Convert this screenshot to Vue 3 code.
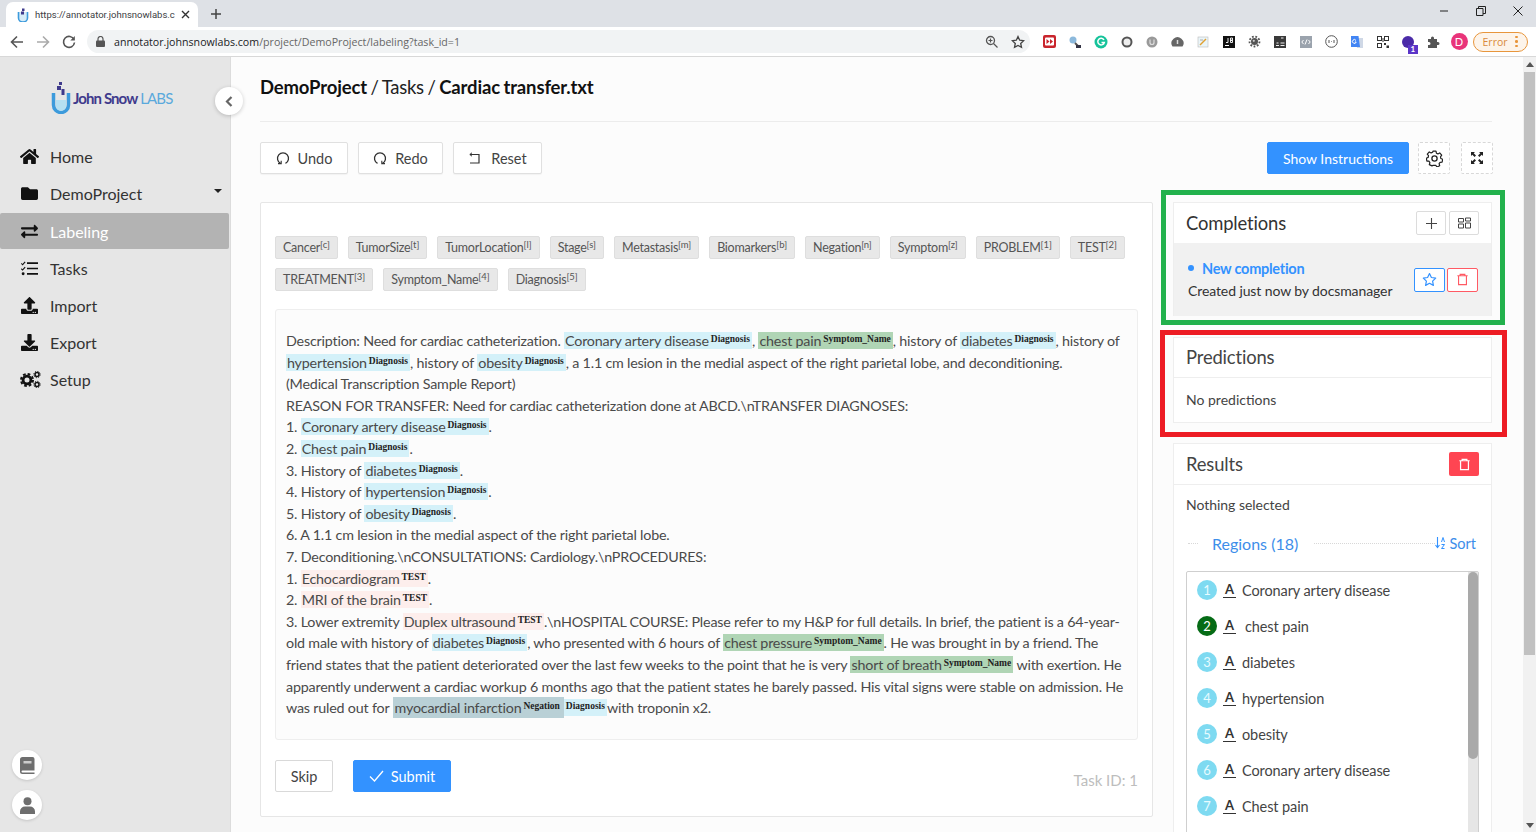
<script setup>
const tags1 = [['Cancer','c'],['TumorSize','t'],['TumorLocation','l'],['Stage','s'],['Metastasis','m'],['Biomarkers','b'],['Negation','n'],['Symptom','z'],['PROBLEM','1'],['TEST','2']]
const tags2 = [['TREATMENT','3'],['Symptom_Name','4'],['Diagnosis','5']]
const D = 'Diagnosis', S = 'Symptom_Name', T = 'TEST'
const lines = [
  ['Description: Need for cardiac catheterization. ', ['Coronary artery disease', D], ', ', ['chest pain', S], ', history of ', ['diabetes', D], ', history of'],
  [['hypertension', D], ', history of ', ['obesity', D], ', a 1.1 cm lesion in the medial aspect of the right parietal lobe, and deconditioning.'],
  ['(Medical Transcription Sample Report)'],
  ['REASON FOR TRANSFER: Need for cardiac catheterization done at ABCD.\\nTRANSFER DIAGNOSES:'],
  ['1. ', ['Coronary artery disease', D], '.'],
  ['2. ', ['Chest pain', D], '.'],
  ['3. History of ', ['diabetes', D], '.'],
  ['4. History of ', ['hypertension', D], '.'],
  ['5. History of ', ['obesity', D], '.'],
  ['6. A 1.1 cm lesion in the medial aspect of the right parietal lobe.'],
  ['7. Deconditioning.\\nCONSULTATIONS: Cardiology.\\nPROCEDURES:'],
  ['1. ', ['Echocardiogram', T], '.'],
  ['2. ', ['MRI of the brain', T], '.'],
  ['3. Lower extremity ', ['Duplex ultrasound', T], '.\\nHOSPITAL COURSE: Please refer to my H&P for full details. In brief, the patient is a 64-year-'],
  ['old male with history of ', ['diabetes', D], ', who presented with 6 hours of ', ['chest pressure', S], '. He was brought in by a friend. The'],
  ['friend states that the patient deteriorated over the last few weeks to the point that he is very ', ['short of breath', S], ' with exertion. He'],
  ['apparently underwent a cardiac workup 6 months ago that the patient states he barely passed. His vital signs were stable on admission. He'],
  ['was ruled out for ', ['myocardial infarction', 'Negation'], ['', D], 'with troponin x2.']
]
const cls = { Diagnosis: 'hl-d', Symptom_Name: 'hl-s', TEST: 'hl-t', Negation: 'hl-n' }
const regions = [
  ['1', 'Coronary artery disease', false],
  ['2', 'chest pain', true],
  ['3', 'diabetes', false],
  ['4', 'hypertension', false],
  ['5', 'obesity', false],
  ['6', 'Coronary artery disease', false],
  ['7', 'Chest pain', false]
]
const nav = [
  { t: 'Home', v: '0 0 576 512', d: 'M280.37 148.26L96 300.11V464a16 16 0 0 0 16 16l112.06-.29a16 16 0 0 0 15.92-16V368a16 16 0 0 1 16-16h64a16 16 0 0 1 16 16v95.64a16 16 0 0 0 16 16.05L464 480a16 16 0 0 0 16-16V300L295.67 148.26a12.19 12.19 0 0 0-15.3 0zM571.6 251.47L488 182.56V44.05a12 12 0 0 0-12-12h-56a12 12 0 0 0-12 12v72.61L318.47 43a48 48 0 0 0-61 0L4.34 251.47a12 12 0 0 0-1.6 16.9l25.5 31A12 12 0 0 0 45.15 301l235.22-193.74a12.19 12.19 0 0 1 15.3 0L530.9 301a12 12 0 0 0 16.9-1.6l25.5-31a12 12 0 0 0-1.7-16.93z' },
  { t: 'DemoProject', v: '0 0 512 512', d: 'M464 128H272l-64-64H48C21.49 64 0 85.49 0 112v288c0 26.51 21.49 48 48 48h416c26.51 0 48-21.49 48-48V176c0-26.51-21.49-48-48-48z', caret: true },
  { t: 'Labeling', active: true, v: '0 0 512 512', d: 'M0 168v-16c0-13.255 10.745-24 24-24h360V80c0-21.367 25.899-32.042 40.971-16.971l80 80c9.372 9.373 9.372 24.569 0 33.941l-80 80C409.956 271.982 384 261.456 384 240v-48H24c-13.255 0-24-10.745-24-24zm488 152H128v-48c0-21.314-25.862-32.08-40.971-16.971l-80 80c-9.372 9.373-9.372 24.569 0 33.941l80 80C102.057 463.997 128 453.437 128 432v-48h360c13.255 0 24-10.745 24-24v-16c0-13.255-10.745-24-24-24z' },
  { t: 'Tasks', v: '0 0 512 512', d: 'M180 70h332v52H180zM180 230h332v52H180zM180 390h332v52H180zM20 92l26 26L112 42l26 22-90 100L0 116zM20 252l26 26 66-76 26 22-90 100L0 276zM64 372a44 44 0 1 1 0 88 44 44 0 0 1 0-88z' },
  { t: 'Import', v: '0 0 512 512', d: 'M296 384h-80c-13.3 0-24-10.7-24-24V192h-87.7c-17.8 0-26.7-21.5-14.1-34.1L242.3 5.7c7.5-7.5 19.8-7.5 27.3 0l152.2 152.2c12.6 12.6 3.7 34.1-14.1 34.1H320v168c0 13.3-10.7 24-24 24zm216-8v112c0 13.3-10.7 24-24 24H24c-13.3 0-24-10.7-24-24V376c0-13.3 10.7-24 24-24h136v8c0 30.9 25.1 56 56 56h80c30.9 0 56-25.1 56-56v-8h136c13.3 0 24 10.7 24 24zm-124 88c0-11-9-20-20-20s-20 9-20 20 9 20 20 20 20-9 20-20zm64 0c0-11-9-20-20-20s-20 9-20 20 9 20 20 20 20-9 20-20z' },
  { t: 'Export', v: '0 0 512 512', d: 'M216 0h80c13.3 0 24 10.7 24 24v168h87.7c17.8 0 26.7 21.5 14.1 34.1L269.7 378.3c-7.5 7.5-19.8 7.5-27.3 0L90.1 226.1c-12.6-12.6-3.7-34.1 14.1-34.1H192V24c0-13.3 10.7-24 24-24zm296 376v112c0 13.3-10.7 24-24 24H24c-13.3 0-24-10.7-24-24V376c0-13.3 10.7-24 24-24h146.7l49 49c20.1 20.1 52.5 20.1 72.6 0l49-49H488c13.3 0 24 10.7 24 24zm-124 88c0-11-9-20-20-20s-20 9-20 20 9 20 20 20 20-9 20-20zm64 0c0-11-9-20-20-20s-20 9-20 20 9 20 20 20 20-9 20-20z' },
  { t: 'Setup', cogs: true }
]
const trash = 'M5.5 4V2.5h5V4M2.5 4h11M3.8 4v9.500h8.400V4'
</script>

<template>
  <div class="page">
    <div class="tabstrip">
      <div class="tab">
        <svg class="fav" width="12" height="14" viewBox="0 0 12 14"><path d="M1.5 4v6a4.5 4 0 0 0 9 0V4" fill="#d6ecf8" stroke="#3d9bdc" stroke-width="1.6"/><rect x="5" y="0.5" width="2.5" height="2.5" fill="#3f3a8c"/><rect x="4" y="3.5" width="3" height="3" fill="#3f3a8c"/></svg>
        <span class="tab-title">https://annotator.johnsnowlabs.c</span>
        <svg class="tab-x" width="9" height="9" viewBox="0 0 9 9"><path d="M1 1l7 7M8 1L1 8" stroke="#333" stroke-width="1.4"/></svg>
      </div>
      <svg class="plus" width="12" height="12" viewBox="0 0 12 12"><path d="M6 1v10M1 6h10" stroke="#444" stroke-width="1.5"/></svg>
      <div class="winctl">
        <svg width="12" height="12" viewBox="0 0 12 12"><path d="M2 6h8" stroke="#222" stroke-width="1"/></svg>
        <svg width="12" height="12" viewBox="0 0 12 12"><path d="M1.5 3.5h6.5v7H1.5zM3.5 3.5V1.5h7v7H8" fill="none" stroke="#222"/></svg>
        <svg width="12" height="12" viewBox="0 0 12 12"><path d="M1.5 1.5l9 9M10.5 1.5l-9 9" stroke="#222"/></svg>
      </div>
    </div>
    <div class="toolbar">
      <div class="navbtn"><svg width="14" height="14" viewBox="0 0 14 14"><path d="M13 7H2M7 1.5L1.5 7 7 12.5" fill="none" stroke="#555" stroke-width="1.6"/></svg></div>
      <div class="navbtn"><svg width="14" height="14" viewBox="0 0 14 14"><path d="M1 7h11M7 1.5L12.5 7 7 12.5" fill="none" stroke="#aaa" stroke-width="1.6"/></svg></div>
      <div class="navbtn"><svg width="14" height="14" viewBox="0 0 14 14"><path d="M12 4.5A5.5 5.5 0 1 0 12.5 7.5" fill="none" stroke="#555" stroke-width="1.6"/><path d="M12.8 1v4.5H8.3z" fill="#555"/></svg></div>
      <div class="omni">
        <svg width="9" height="11" viewBox="0 0 9 11"><rect y="4.5" width="9" height="6.5" rx="1" fill="#555"/><path d="M2 5V3a2.5 2.5 0 0 1 5 0v2" fill="none" stroke="#555" stroke-width="1.2"/></svg>
        <span class="url"><span class="url-host">annotator.johnsnowlabs.com</span>/project/DemoProject/labeling?task_id=1</span>
        <svg class="om-zoom" width="13" height="13" viewBox="0 0 13 13"><circle cx="5.5" cy="5.5" r="4" fill="none" stroke="#555" stroke-width="1.3"/><path d="M8.5 8.5l4 4M3.5 5.5h4M5.5 3.5v4" stroke="#555" stroke-width="1.2"/></svg>
        <svg class="om-star" width="14" height="14" viewBox="0 0 14 14"><path d="M7 1.6l1.7 3.6 3.9.5-2.9 2.7.8 3.9L7 10.4l-3.5 1.9.8-3.9-2.9-2.7 3.9-.5z" fill="none" stroke="#444" stroke-width="1.3"/></svg>
      </div>
      <div class="exts">
        <div class="ext"><svg width="13" height="13" viewBox="0 0 13 13"><rect width="13" height="13" rx="2" fill="#c9252d"/><rect x="2" y="2.500" width="9" height="8" rx="1" fill="#fff"/><path d="M3.500 4l3 2.500-3 2.500zM7 4l3 2.500-3 2.500z" fill="#c9252d"/></svg></div>
        <div class="ext"><svg width="14" height="14" viewBox="0 0 14 14"><circle cx="5" cy="5" r="3.500" fill="#8cb9dc"/><path d="M7 8l3 3" stroke="#555" stroke-width="2"/><rect x="8" y="10" width="5" height="3" fill="#334"/></svg></div>
        <div class="ext"><svg width="14" height="14" viewBox="0 0 14 14"><circle cx="7" cy="7" r="6.500" fill="#15c39a"/><path d="M10 5A3.300 3.300 0 1 0 10.300 7.500H7.500" fill="none" stroke="#fff" stroke-width="1.500"/></svg></div>
        <div class="ext"><svg width="12" height="12" viewBox="0 0 12 12"><circle cx="6" cy="6" r="4.500" fill="#eee" stroke="#555" stroke-width="2"/></svg></div>
        <div class="ext"><svg width="12" height="12" viewBox="0 0 12 12"><circle cx="6" cy="6" r="5.500" fill="#999"/><path d="M4 3.500v3a2 2 0 0 0 4 0v-3" fill="none" stroke="#ddd" stroke-width="1.200"/></svg></div>
        <div class="ext"><svg width="13" height="11" viewBox="0 0 13 11"><path d="M1.500 10.500a6 6 0 1 1 10 0z" fill="#666"/><path d="M6.500 8V4" stroke="#ddd" stroke-width="1.500"/></svg></div>
        <div class="ext"><svg width="12" height="12" viewBox="0 0 12 12"><rect x="1" y="1" width="10" height="10" fill="#eaf5f9" stroke="#bbb" stroke-width=".6"/><path d="M3 9l6-6" stroke="#e0a030" stroke-width="1.500"/><path d="M3 4h3" stroke="#aaa"/></svg></div>
        <div class="ext"><svg width="12" height="12" viewBox="0 0 12 12"><rect width="12" height="12" fill="#111"/><path d="M2 9.500h4" stroke="#fff"/><path d="M5 2v4.500H3M7.500 2v4.500h2V4.300h-2M7.500 4.300h2V2h-2" fill="none" stroke="#fff" stroke-width=".9"/></svg></div>
        <div class="ext"><svg width="13" height="13" viewBox="0 0 13 13"><circle cx="6.500" cy="6.500" r="3.500" fill="#555"/><circle cx="6.500" cy="6.500" r="5" fill="none" stroke="#555" stroke-width="1.800" stroke-dasharray="1.800 1.600"/><circle cx="5.800" cy="5.800" r="1.100" fill="#ccc"/></svg></div>
        <div class="ext"><svg width="12" height="12" viewBox="0 0 12 12"><rect width="12" height="12" fill="#3a3a3a"/><path d="M7 2H9.500M2 9.500h3M6.500 7h4M6.500 9.500h4M2.500 7h2" stroke="#eee"/></svg></div>
        <div class="ext"><svg width="12" height="12" viewBox="0 0 12 12"><rect width="12" height="12" fill="#9ba3ad"/><path d="M3.500 4L1.800 6l1.700 2M8.500 4l1.700 2-1.700 2M7 3.500l-2 5" fill="none" stroke="#fff"/></svg></div>
        <div class="ext"><svg width="13" height="13" viewBox="0 0 13 13"><circle cx="6.500" cy="6.500" r="5.800" fill="#fff" stroke="#555"/><path d="M4 5v3M9 5v3" stroke="#555"/><path d="M6 6.500h1" stroke="#999"/></svg></div>
        <div class="ext"><svg width="14" height="14" viewBox="0 0 14 14"><path d="M6 3h7v10H7z" fill="#cfd8e6"/><path d="M1 1h7.500l1.500 11H1z" fill="#4285f4"/><path d="M6 5.500A1.900 1.900 0 1 0 6.200 7H4.800" fill="none" stroke="#fff"/></svg></div>
        <div class="ext"><svg width="12" height="12" viewBox="0 0 12 12"><rect x="0.500" y="0.500" width="4" height="4" fill="none" stroke="#333"/><rect x="7.500" y="0.500" width="4" height="4" fill="none" stroke="#333"/><rect x="0.500" y="7.500" width="4" height="4" fill="none" stroke="#333"/><path d="M7 7h2v2H7zM9.500 9.500H12V12H9.500zM5.500 2h1v4h-1z" fill="#333"/></svg></div>
        <div class="ext ext-en"><span class="en-circle"></span><span class="en-badge">1</span></div>
        <div class="ext"><svg width="13" height="13" viewBox="0 0 13 13"><path d="M1 4h3V3a1.500 1.500 0 0 1 3 0v1h3v3h1a1.500 1.500 0 0 1 0 3h-1v3H1V10h1a1.500 1.500 0 0 0 0-3H1z" fill="#555"/></svg></div>
      </div>
      <div class="avatar">D</div>
      <div class="err">Error<span class="err-dots"><i></i><i></i><i></i></span></div>
    </div>

    <div class="app">
      <aside class="side">
        <div class="logo">
          <svg width="20" height="33" viewBox="0 0 20 33"><path d="M2.500 12v12a7.500 7.500 0 0 0 15 0V12" fill="none" stroke="#3d9bdc" stroke-width="3.500"/><path d="M5 19h10v6a5 5 0 0 1-10 0z" fill="#b5e0f2"/><rect x="8" y="1" width="3" height="3" fill="#3f3a8c"/><rect x="6" y="5" width="4" height="4" fill="#3f3a8c"/><rect x="10.500" y="8" width="3" height="6" fill="#3f3a8c"/></svg>
          <span class="logo-text"><b>John Snow</b> <span>LABS</span></span>
        </div>
        <div class="collapse"><svg width="8" height="11" viewBox="0 0 8 11"><path d="M6.500 1L2 5.500 6.500 10" fill="none" stroke="#666" stroke-width="2.200"/></svg></div>
        <nav class="nav">
          <a v-for="n in nav" :key="n.t" class="nav-item" :class="{ active: n.active }">
            <svg v-if="n.cogs" class="nav-ic cogs" width="21" height="17" viewBox="0 0 21 17">
              <circle cx="7" cy="9" r="3.900" fill="none" stroke="#111" stroke-width="2.800"/>
              <circle cx="7" cy="9" r="6" fill="none" stroke="#111" stroke-width="2" stroke-dasharray="2.700 2"/>
              <circle cx="17" cy="3.500" r="2" fill="none" stroke="#111" stroke-width="1.500"/>
              <circle cx="17" cy="3.500" r="3.200" fill="none" stroke="#111" stroke-width="1" stroke-dasharray="1.200 1.300"/>
              <circle cx="17" cy="13.500" r="2" fill="none" stroke="#111" stroke-width="1.500"/>
              <circle cx="17" cy="13.500" r="3.200" fill="none" stroke="#111" stroke-width="1" stroke-dasharray="1.200 1.300"/>
            </svg>
            <svg v-else class="nav-ic" height="17" width="19" :viewBox="n.v"><path :d="n.d" fill="#111"/></svg>
            <span>{{ n.t }}</span>
            <i v-if="n.caret" class="caret"></i>
          </a>
        </nav>
        <div class="side-foot">
          <div class="fab"><svg width="15" height="17" viewBox="0 0 15 17"><path d="M2.500 0h10A2 2 0 0 1 14.500 2v11.500H2.500a1 1 0 0 0 0 2h12V17H2.500A2.500 2.500 0 0 1 0 14.500v-12A2.500 2.500 0 0 1 2.500 0z" fill="#6e6e6e"/><rect x="3.500" y="4" width="8" height="2.500" fill="#ccc"/></svg></div>
          <div class="fab"><svg width="15" height="17" viewBox="0 0 15 17"><circle cx="7.500" cy="4.300" r="4" fill="#6e6e6e"/><path d="M0 17v-2.500A5 5 0 0 1 5 9.500h5a5 5 0 0 1 5 5V17z" fill="#6e6e6e"/></svg></div>
        </div>
      </aside>

      <main class="main">
        <h1 class="crumb"><b>DemoProject</b> / Tasks / <b>Cardiac transfer.txt</b></h1>
        <div class="actions">
          <button class="btn b-undo"><svg width="14" height="14" viewBox="0 0 14 14"><path d="M4.500 12.300A5.500 5.500 0 1 1 9.500 12.300" fill="none" stroke="#333" stroke-width="1.300"/><path d="M2 12.600h3.200v-2.800" fill="none" stroke="#333" stroke-width="1.100"/></svg>Undo</button>
          <button class="btn b-redo"><svg width="14" height="14" viewBox="0 0 14 14"><path d="M4.500 12.300A5.500 5.500 0 1 1 9.500 12.300" fill="none" stroke="#333" stroke-width="1.300"/><path d="M12 12.600H8.800v-2.800" fill="none" stroke="#333" stroke-width="1.100"/></svg>Redo</button>
          <button class="btn b-reset"><svg width="13" height="13" viewBox="0 0 13 13"><path d="M2 2.500h9v8.500H2" fill="none" stroke="#333" stroke-width="1.200"/><path d="M4 .8L1.800 2.500 4 4.200" fill="none" stroke="#333" stroke-width="1"/></svg>Reset</button>
          <div class="spacer"></div>
          <button class="btn-primary show">Show Instructions</button>
          <button class="dash d-gear"><svg width="17" height="17" viewBox="0 0 17 17"><circle cx="8.500" cy="8.500" r="2.600" fill="none" stroke="#222" stroke-width="1.300"/><path d="M7 1.200h3l.4 2 1.500.7 1.800-1 2 2.300-1.200 1.600.3 1.700 1.900.8-.6 2.900-2 .1-1 1.400.6 2-2.700 1.300-1.200-1.700H7.200L6 15.900l-2.700-1.300.6-2-1-1.400-2-.1-.6-2.900 1.900-.8.300-1.700L1.300 4.200l2-2.300 1.800 1 1.500-.7z" fill="none" stroke="#222" stroke-width="1.200" stroke-linejoin="round"/></svg></button>
          <button class="dash d-full"><svg width="14" height="14" viewBox="0 0 14 14"><path d="M1 5V1h4L3.700 2.300 6 4.600 4.600 6 2.300 3.700zM13 5V1H9l1.300 1.300L8 4.600 9.400 6l2.300-2.300zM1 9v4h4l-1.300-1.300L6 9.400 4.600 8l-2.300 2.300zM13 9v4H9l1.300-1.300L8 9.400 9.400 8l2.300 2.300z" fill="#222"/></svg></button>
        </div>

        <div class="cols">
          <section class="editor">
            <div class="tags">
              <span v-for="t in tags1" :key="t[0]" class="tag">{{ t[0] }}<sup>[{{ t[1] }}]</sup></span>
            </div>
            <div class="tags tags2">
              <span v-for="t in tags2" :key="t[0]" class="tag">{{ t[0] }}<sup>[{{ t[1] }}]</sup></span>
            </div>
            <div class="doc">
              <div v-for="(l, i) in lines" :key="i" class="ln">
                <template v-for="(s, j) in l" :key="j">
                  <template v-if="typeof s === 'string'">{{ s }}</template>
                  <span v-else class="hl" :class="[cls[s[1]], { 'hl-empty': !s[0] }]">{{ s[0] }}<em class="lb">{{ s[1] }}</em></span>
                </template>
              </div>
            </div>
            <div class="foot">
              <button class="skip">Skip</button>
              <button class="btn-primary submit"><svg width="15" height="12" viewBox="0 0 15 12"><path d="M1 6.500l4.500 4.500L14 1" fill="none" stroke="#fff" stroke-width="1.300"/></svg>Submit</button>
              <div class="spacer"></div>
              <span class="taskid">Task ID: 1</span>
            </div>
          </section>

          <aside class="right">
            <div class="card c-comp">
              <div class="hd">
                <span class="ttl dark">Completions</span>
                <div class="hd-btns">
                  <button class="mini"><svg width="13" height="13" viewBox="0 0 13 13"><path d="M6.500 1v11M1 6.500h11" stroke="#444" stroke-width="1.100"/></svg></button>
                  <button class="mini"><svg width="13" height="12" viewBox="0 0 13 12"><path d="M.5 1.500h5v3.500h-5zM7.500 1h5v3h-5zM.5 7h5v4h-5zM7.500 6h5v5h-5z" fill="none" stroke="#444" stroke-width="1"/></svg></button>
                </div>
              </div>
              <div class="comp-row">
                <div class="comp-txt">
                  <div class="comp-name"><i class="dot"></i>New completion</div>
                  <div class="comp-by">Created just now by docsmanager</div>
                </div>
                <button class="act blue"><svg width="15" height="15" viewBox="0 0 15 15"><path d="M7.500 1.500l1.900 4 4.300.6-3.100 3 .8 4.300-3.900-2.100-3.900 2.100.8-4.300-3.100-3 4.300-.6z" fill="none" stroke="#3392ff" stroke-width="1.200" stroke-linejoin="round"/></svg></button>
                <button class="act red"><svg width="15" height="15" viewBox="0 0 16 16"><path :d="trash" fill="none" stroke="#ff5a64" stroke-width="1.200"/></svg></button>
              </div>
            </div>
            <div class="card c-pred">
              <div class="hd hd-line"><span class="ttl">Predictions</span></div>
              <div class="pred-body">No predictions</div>
            </div>
            <div class="card c-res">
              <div class="hd hd-line">
                <span class="ttl">Results</span>
                <button class="del"><svg width="15" height="15" viewBox="0 0 16 16"><path :d="trash" fill="none" stroke="#fff" stroke-width="1.300"/></svg></button>
              </div>
              <div class="res-body">
                <div class="nothing">Nothing selected</div>
                <div class="reg-head">
                  <i class="dots short"></i>
                  <span class="reg-title">Regions (18)</span>
                  <i class="dots long"></i>
                  <span class="sort"><svg width="11" height="12" viewBox="0 0 11 12"><path d="M2.500 0v10M.5 8l2 2.500L4.500 8" fill="none" stroke="#3392ff" stroke-width="1.100"/><path d="M6.500 5l1.500-4.500L9.500 5M6.500 7.500h3l-3 4h3" fill="none" stroke="#3392ff" stroke-width="1"/></svg>Sort</span>
                </div>
                <div class="list">
                  <div class="list-scroll"><i></i></div>
                  <div v-for="r in regions" :key="r[0]" class="reg">
                    <span class="num" :class="{ green: r[2] }">{{ r[0] }}</span>
                    <span class="a-ic">A</span>
                    <span class="reg-t" :class="{ pad: r[2] }">{{ r[1] }}</span>
                  </div>
                </div>
              </div>
            </div>
          </aside>
        </div>
        <div class="frame f-green"></div>
        <div class="frame f-red"></div>
      </main>

      <div class="vscroll">
        <svg class="up" width="8" height="5" viewBox="0 0 8 5"><path d="M4 0l4 5H0z" fill="#555"/></svg>
        <div class="thumb"></div>
        <svg class="down" width="8" height="5" viewBox="0 0 8 5"><path d="M4 5L0 0h8z" fill="#555"/></svg>
      </div>
    </div>
  </div>
</template>

<style scoped>
.page { width: 1536px; height: 832px; display: flex; flex-direction: column; overflow: hidden; font-family: Lato, "Liberation Sans", sans-serif; color: #444; background: #fcfcfc; }
button { font-family: inherit; cursor: pointer; }

.tabstrip { height: 27px; flex: none; background: #dee1e6; display: flex; align-items: flex-end; position: relative; }
.tab { width: 192px; height: 25px; margin-left: 6px; background: #fff; border-radius: 7px 7px 0 0; display: flex; align-items: center; padding-left: 11px; box-sizing: border-box; }
.fav { flex: none; }
.tab-title { width: 141px; margin-left: 6px; font-family: Roboto, sans-serif; font-size: 9.5px; white-space: nowrap; overflow: hidden; color: #3c4043; }
.tab-x { margin-left: 5px; flex: none; }
.plus { margin: 0 0 7px 12px; }
.winctl { position: absolute; right: 12px; top: 5px; display: flex; gap: 25px; }

.toolbar { height: 29px; flex: none; background: #fff; border-bottom: 1px solid #d8d8d8; display: flex; align-items: center; padding-left: 4px; }
.navbtn { width: 26px; display: flex; justify-content: center; }
.omni { width: 943px; height: 23px; margin-left: 5px; background: #f1f3f4; border-radius: 12px; display: flex; align-items: center; padding-left: 9px; box-sizing: border-box; }
.url { margin-left: 9px; font-size: 10.65px; color: #666; font-family: "Open Sans", sans-serif; white-space: nowrap; flex: 1; }
.url-host { color: #202124; }
.om-zoom { margin-right: 13px; }
.om-star { margin-right: 5px; }
.exts { display: flex; margin-left: 7px; }
.ext { width: 25.6px; height: 16px; display: flex; align-items: center; justify-content: center; position: relative; }
.en-circle { width: 12px; height: 12px; border-radius: 50%; background: #4b2ba8; }
.en-badge { position: absolute; right: 3px; bottom: -4px; width: 10px; height: 9px; background: #5b35c8; color: #fff; font-size: 8px; line-height: 9px; text-align: center; font-weight: 700; }
.avatar { width: 17px; height: 17px; margin-left: 4px; border-radius: 50%; background: #e9347a; color: #fff; font-size: 11px; line-height: 17px; text-align: center; }
.err { width: 55px; height: 20px; margin-left: 5px; box-sizing: border-box; border: 1px solid #e8963c; border-radius: 10px; background: #fdf4ea; color: #d98a3a; font-size: 10.5px; line-height: 18px; padding-left: 9px; display: flex; align-items: center; font-family: "Open Sans", sans-serif; }
.err-dots { display: flex; flex-direction: column; gap: 2px; margin-left: auto; margin-right: 9px; }
.err-dots i { width: 2.5px; height: 2.5px; background: #e8963c; border-radius: 50%; }

.app { flex: 1; min-height: 0; display: flex; }
.side { width: 231px; flex: none; background: #e6e6e6; box-shadow: inset -1px 0 0 #dcdcdc; position: relative; display: flex; flex-direction: column; z-index: 1; }
.logo { height: 81px; padding: 24px 0 0 51px; box-sizing: border-box; display: flex; align-items: flex-start; }
.logo-text { margin: 8px 0 0 2px; font-size: 15px; letter-spacing: -.9px; white-space: nowrap; }
.logo-text b { color: #3f3a8c; font-weight: 700; }
.logo-text span { color: #5aa9dc; }
.collapse { position: absolute; left: 215px; top: 30px; width: 28px; height: 28px; border-radius: 50%; background: #fff; box-shadow: 0 1px 4px rgba(0,0,0,.2); display: flex; align-items: center; justify-content: center; }
.nav { display: flex; flex-direction: column; }
.nav-item { height: 37px; width: 229px; box-sizing: border-box; display: flex; align-items: center; padding-left: 20px; font-size: 16px; color: #333; position: relative; border-radius: 2px; }
.nav-ic { width: 19px; flex: none; margin-right: 11px; }
.nav-ic.cogs { width: 21px; margin-right: 9px; }
.active { color: #fff; background: #b3b3b3; height: 36px; margin: 1px 0; }
.caret { position: absolute; right: 7px; top: 14px; border: 4px solid transparent; border-top: 4px solid #222; border-bottom: 0; }
.side-foot { margin-top: auto; padding: 0 0 12px 12px; display: flex; flex-direction: column; gap: 10px; }
.fab { width: 30px; height: 30px; border-radius: 50%; background: #fff; box-shadow: 0 1px 3px rgba(0,0,0,.15); display: flex; align-items: center; justify-content: center; }

.main { flex: 1; min-width: 0; padding: 0 31px 0 29px; position: relative; overflow: hidden; background: #fcfcfc; }
.crumb { margin: 0; height: 65px; box-sizing: border-box; border-bottom: 1px solid #ececec; font-size: 18.5px; font-weight: 400; color: #222; line-height: 60px; letter-spacing: -.28px; word-spacing: -.8px; }
.crumb b { font-weight: 700; color: #111; letter-spacing: -.15px; }
.actions { display: flex; margin-top: 20px; height: 32px; }
.spacer { flex: 1; }
.btn { height: 32px; box-sizing: border-box; background: #fff; border: 1px solid #e0e0e0; border-radius: 2px; box-shadow: 0 1px 1px rgba(0,0,0,.04); font-size: 14.5px; color: #444; padding: 0; display: flex; align-items: center; justify-content: center; gap: 8px; }
.b-undo { width: 88px; }
.b-redo { width: 85px; margin-left: 10px; }
.b-reset { width: 89px; margin-left: 10px; gap: 10px; }
.btn-primary { background: #3392ff; border: 1px solid #3392ff; color: #fff; border-radius: 2px; font-size: 14.5px; }
.show { width: 142px; height: 32px; padding: 0; font-size: 14px; }
.dash { width: 32px; height: 32px; padding: 0; background: #fff; border: 1px dashed #d8d8d8; border-radius: 2px; display: flex; align-items: center; justify-content: center; }
.d-gear { margin-left: 9px; }
.d-full { margin-left: 11px; margin-right: -1px; }
.cols { display: flex; gap: 20px; margin-top: 28px; align-items: flex-start; }

.editor { width: 893px; height: 615px; flex: none; box-sizing: border-box; background: #fff; border: 1px solid #e6e6e6; border-radius: 2px; padding: 33px 14px 0; display: flex; flex-direction: column; }
.tags { display: flex; gap: 10px; height: 23px; }
.tags2 { margin-top: 9px; }
.tag { height: 23px; box-sizing: border-box; background: #e8e8e8; border: 1px solid #dedede; border-radius: 2px; padding: 0 7px; font-size: 12.5px; letter-spacing: -.25px; line-height: 21px; color: #555; white-space: nowrap; }
.tag sup { font-size: 9.5px; line-height: 0; vertical-align: 4px; letter-spacing: 0; }
.doc { margin-top: 18px; height: 431px; box-sizing: border-box; border: 1px solid #eeeeee; border-radius: 3px; background: #fcfcfc; padding: 20px 10px 0; }
.ln { height: 21.6px; line-height: 21.6px; font-size: 14.3px; color: #4a4a4a; white-space: pre; letter-spacing: -.2px; }
.hl { padding: 0 2px 0 1px; }
.hl-d { background: #d4f1f9; }
.hl-s { background: #b0d5b5; }
.hl-t { background: #fdeeec; }
.hl-n { background: #b9d0d6; padding: 2px 4px 2px 2px; }
.hl-empty { padding-left: 0; }
.lb { font: 700 9.5px "Liberation Serif", serif; color: #222; line-height: 0; vertical-align: 4px; margin-left: 2px; letter-spacing: 0; }
.foot { display: flex; align-items: center; margin-top: 20px; }
.skip { width: 58px; height: 32px; background: #fff; border: 1px solid #d9d9d9; border-radius: 2px; font-size: 14.5px; color: #444; padding: 0; }
.submit { width: 98px; height: 32px; margin-left: 20px; padding: 0; display: flex; align-items: center; justify-content: center; gap: 7px; }
.taskid { font-size: 15px; color: #bdbdbd; margin-top: 8px; }

.right { width: 319px; flex: none; display: flex; flex-direction: column; }
.card { background: #fff; border: 1px solid #eeeeee; box-sizing: border-box; }
.c-comp { height: 114px; }
.c-pred { height: 86px; margin-top: 21px; }
.c-pred .hd { height: 37px; padding-bottom: 2px; }
.c-res { margin-top: 20px; height: 500px; }
.hd { height: 40px; display: flex; align-items: center; padding: 0 12px; justify-content: space-between; }
.hd-line { border-bottom: 1px solid #eeeeee; }
.ttl { font-size: 18.4px; letter-spacing: -.15px; color: #444; }
.ttl.dark { color: #333; }
.hd-btns { display: flex; gap: 3px; }
.mini { width: 30px; height: 24px; padding: 0; background: #fff; border: 1px solid #dcdcdc; border-radius: 2px; display: flex; align-items: center; justify-content: center; }
.comp-row { height: 73px; background: #f1f1f1; display: flex; align-items: center; padding: 0 13px 0 14px; }
.comp-txt { flex: 1; }
.comp-name { color: #3392ff; font-size: 14.5px; font-weight: 700; display: flex; align-items: center; height: 20px; letter-spacing: -.25px; }
.dot { width: 6px; height: 6px; border-radius: 50%; background: #3392ff; margin-right: 8px; }
.comp-by { font-size: 14px; color: #333; margin-top: 2px; height: 21px; line-height: 21px; white-space: nowrap; letter-spacing: -.1px; }
.act { width: 31px; height: 24px; padding: 0; background: #fff; border-radius: 2px; display: flex; align-items: center; justify-content: center; }
.act.blue { border: 1px solid #3392ff; }
.act.red { border: 1px solid #ff5a64; margin-left: 2px; }
.pred-body { padding: 13px 12px; font-size: 14px; color: #444; }
.del { width: 30px; height: 24px; padding: 0; border: 0; background: #ff4552; border-radius: 2px; display: flex; align-items: center; justify-content: center; }
.res-body { padding: 10px 12px 0; }
.nothing { font-size: 14px; color: #444; height: 20px; line-height: 20px; letter-spacing: -.03px; }
.reg-head { display: flex; align-items: center; height: 28px; margin-top: 14px; }
.dots { display: block; height: 0; border-top: 1px dotted #d8d8d8; }
.dots.short { width: 10px; margin: 0 14px 0 2px; }
.dots.long { flex: 1; margin-left: 16px; }
.reg-title { font-size: 16px; color: #3d8eea; }
.sort { font-size: 14.5px; color: #3d8eea; display: flex; align-items: center; gap: 3px; margin-right: 3px; }
.list { margin-top: 14px; width: 293px; height: 300px; box-sizing: border-box; border: 1px solid #cfcfcf; border-radius: 2px; position: relative; }
.list-scroll { position: absolute; right: 0; top: 0; bottom: 0; width: 10px; background: #e6e6e6; }
.list-scroll i { display: block; height: 187px; background: #a9a9a9; border-radius: 5px; }
.reg { height: 36px; display: flex; align-items: center; padding-left: 10px; }
.num { width: 20px; height: 20px; border-radius: 50%; background: #7edaf1; color: #e7fbff; font-size: 13px; line-height: 20px; text-align: center; flex: none; }
.num.green { background: #056b15; color: #fff; }
.a-ic { margin-left: 6px; width: 13px; height: 14px; border-bottom: 1.5px solid #333; font-size: 13px; line-height: 13px; color: #333; text-align: center; font-weight: 700; flex: none; }
.reg-t { margin-left: 6px; font-size: 14.5px; color: #444; letter-spacing: -.1px; }
.reg-t.pad { margin-left: 9px; }

.frame { position: absolute; box-sizing: border-box; pointer-events: none; }
.f-green { left: 930px; top: 133px; width: 344px; height: 135px; border: 5px solid #22b14c; }
.f-red { left: 929px; top: 273px; width: 347px; height: 107px; border: 5px solid #ed1c24; }

.vscroll { width: 13px; flex: none; background: #f1f1f1; position: relative; }
.thumb { position: absolute; left: 1px; right: 1px; top: 15px; height: 583px; background: #c1c1c1; }
.up { position: absolute; left: 3px; top: 5px; }
.down { position: absolute; left: 3px; bottom: 4px; }
</style>
